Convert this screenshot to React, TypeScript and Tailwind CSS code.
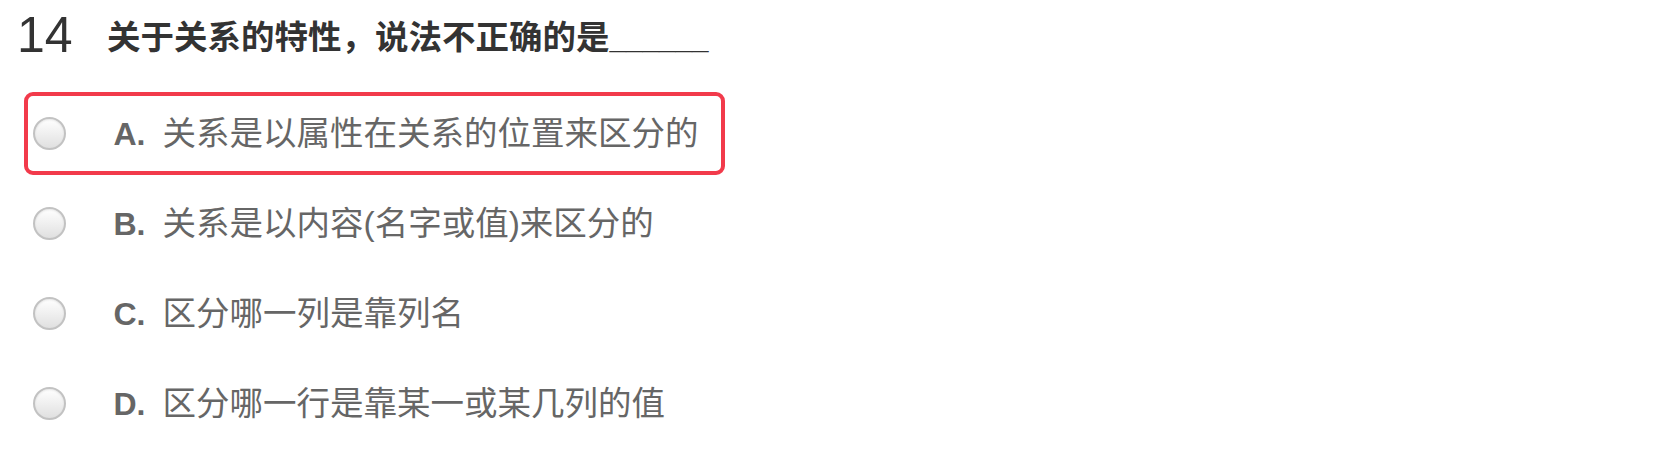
import React from "react";

const options = [
  { key: "A", text: "关系是以属性在关系的位置来区分的", selected: true },
  { key: "B", text: "关系是以内容(名字或值)来区分的", selected: false },
  { key: "C", text: "区分哪一列是靠列名", selected: false },
  { key: "D", text: "区分哪一行是靠某一或某几列的值", selected: false },
];

function Radio() {
  return (
    <span className="block w-[33px] h-[33px] rounded-full border-2 border-[#c2c2c2] bg-gradient-to-b from-[#ffffff] to-[#e0e0e0] shadow-[inset_0_1px_2px_rgba(0,0,0,0.1)] shrink-0" />
  );
}

export default function App() {
  return (
    <div className="w-[1672px] h-[450px] bg-white" style={{ fontFamily: '"Liberation Sans", "Noto Sans CJK SC", sans-serif' }}>
      <div className="flex items-center pl-[17px] h-[70px]">
        <span className="text-[50px] leading-none text-[#333] font-normal w-[90px]">14</span>
        <span className="text-[33.5px] leading-none font-bold text-[#333] mt-[5px]">
          关于关系的特性，说法不正确的是<span className="text-[29.7px]">______</span>
        </span>
      </div>
      <div className="flex flex-col gap-[7px] pl-[24px] pt-[22px]">
        {options.map((o) => (
          <div
            key={o.key}
            className={`flex items-center w-[701px] h-[83px] rounded-[9px] border-[4.5px] ${
              o.selected ? "border-[#f23a4b]" : "border-transparent"
            } pl-[4.5px]`}
          >
            <Radio />
            <span className="ml-[48px] text-[32px] leading-none font-bold text-[#666] mr-[17px]">{o.key}.</span>
            <span className="text-[33.5px] leading-none text-[#666]">{o.text}</span>
          </div>
        ))}
      </div>
    </div>
  );
}
